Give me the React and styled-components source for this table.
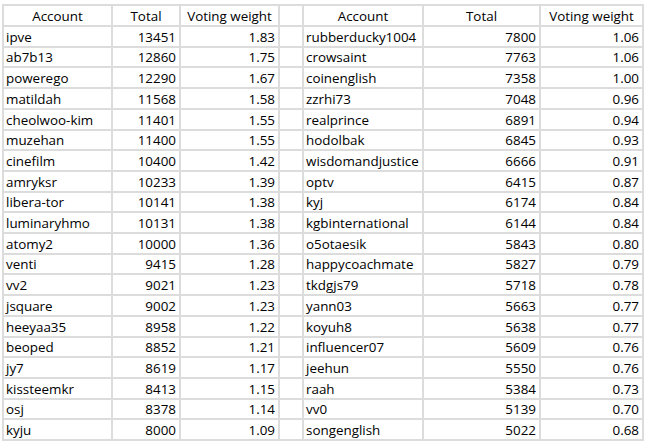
import React from "react";
import styled, { createGlobalStyle } from "styled-components";

const Global = createGlobalStyle`
  html, body { margin: 0; padding: 0; background: #ffffff; }
  body { font-family: "Open Sans", "Noto Sans", "Liberation Sans", sans-serif; }
`;

const Page = styled.div`
  padding: 4px 0 0 2px;
`;

const Sheet = styled.div`
  display: inline-grid;
  grid-template-columns: 107px 66px 97px 22px 118px 115px 101px;
  grid-auto-rows: 18.71px;
  gap: 2px;
  padding: 2px;
  background: #dcdcdc;
`;

const Cell = styled.div`
  background: #ffffff;
  color: #000000;
  font-size: 13.4px;
  line-height: 18px;
  white-space: nowrap;
  display: flex;
  align-items: flex-end;
  justify-content: ${(p) =>
    p.$align === "right" ? "flex-end" : p.$align === "center" ? "center" : "flex-start"};
  padding: 0 ${(p) => (p.$align === "right" ? "3px" : "2px")} 0 2px;
  box-sizing: border-box;
  min-width: 0;
`;

const left = [
  ["ipve", 13451, "1.83"],
  ["ab7b13", 12860, "1.75"],
  ["powerego", 12290, "1.67"],
  ["matildah", 11568, "1.58"],
  ["cheolwoo-kim", 11401, "1.55"],
  ["muzehan", 11400, "1.55"],
  ["cinefilm", 10400, "1.42"],
  ["amryksr", 10233, "1.39"],
  ["libera-tor", 10141, "1.38"],
  ["luminaryhmo", 10131, "1.38"],
  ["atomy2", 10000, "1.36"],
  ["venti", 9415, "1.28"],
  ["vv2", 9021, "1.23"],
  ["jsquare", 9002, "1.23"],
  ["heeyaa35", 8958, "1.22"],
  ["beoped", 8852, "1.21"],
  ["jy7", 8619, "1.17"],
  ["kissteemkr", 8413, "1.15"],
  ["osj", 8378, "1.14"],
  ["kyju", 8000, "1.09"],
];

const right = [
  ["rubberducky1004", 7800, "1.06"],
  ["crowsaint", 7763, "1.06"],
  ["coinenglish", 7358, "1.00"],
  ["zzrhi73", 7048, "0.96"],
  ["realprince", 6891, "0.94"],
  ["hodolbak", 6845, "0.93"],
  ["wisdomandjustice", 6666, "0.91"],
  ["optv", 6415, "0.87"],
  ["kyj", 6174, "0.84"],
  ["kgbinternational", 6144, "0.84"],
  ["o5otaesik", 5843, "0.80"],
  ["happycoachmate", 5827, "0.79"],
  ["tkdgjs79", 5718, "0.78"],
  ["yann03", 5663, "0.77"],
  ["koyuh8", 5638, "0.77"],
  ["influencer07", 5609, "0.76"],
  ["jeehun", 5550, "0.76"],
  ["raah", 5384, "0.73"],
  ["vv0", 5139, "0.70"],
  ["songenglish", 5022, "0.68"],
];

const headers = ["Account", "Total", "Voting weight"];

export default function App() {
  return (
    <Page>
      <Global />
      <Sheet>
        {headers.map((h) => (
          <Cell key={"l" + h} $align="center">{h}</Cell>
        ))}
        <Cell />
        {headers.map((h) => (
          <Cell key={"r" + h} $align="center">{h}</Cell>
        ))}
        {left.map((row, i) => (
          <React.Fragment key={i}>
            <Cell>{row[0]}</Cell>
            <Cell $align="right">{row[1]}</Cell>
            <Cell $align="right">{row[2]}</Cell>
            <Cell />
            <Cell>{right[i][0]}</Cell>
            <Cell $align="right">{right[i][1]}</Cell>
            <Cell $align="right">{right[i][2]}</Cell>
          </React.Fragment>
        ))}
      </Sheet>
    </Page>
  );
}
